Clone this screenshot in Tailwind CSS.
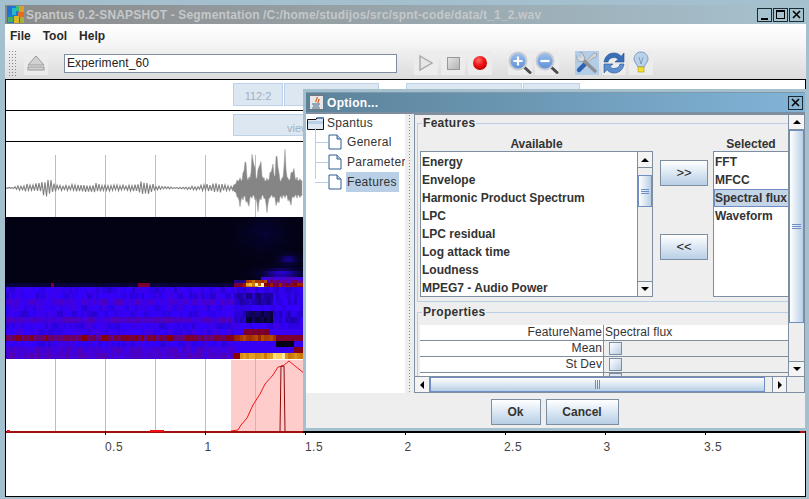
<!DOCTYPE html>
<html lang="en">
<head>
<meta charset="UTF-8">
<title>Spantus</title>
<script src="https://cdn.jsdelivr.net/npm/@tailwindcss/browser@4"></script>
</head>
<body class="m-0 overflow-hidden bg-[#a4bfce] font-['Liberation_Sans',sans-serif] text-[12px] text-[#333]">
<div class="relative w-[809px] h-[499px] flex flex-col pt-[5px] pl-[5px] pr-[3px] overflow-hidden">

  <!-- main title bar -->
  <div class="h-[19px] shrink-0 flex items-center bg-gradient-to-r from-[#8a8a8a] to-[#a6c2cf]">
    <svg width="17" height="17" class="ml-[2px] shrink-0" viewBox="0 0 17 17" shape-rendering="crispEdges">
      <rect width="17" height="17" fill="#1a7ad8"/><rect x="0" y="0" width="5" height="8" fill="#2470d0"/><rect x="5" y="2" width="4" height="7" fill="#26b8c8"/><rect x="9" y="0" width="3" height="5" fill="#38c070"/><rect x="12" y="0" width="5" height="6" fill="#d8a030"/><rect x="11" y="6" width="6" height="5" fill="#e86a20"/><rect x="1" y="11" width="5" height="5" fill="#46b060"/><rect x="7" y="10" width="5" height="7" fill="#d8b828"/><rect x="13" y="11" width="4" height="6" fill="#a8b040"/>
    </svg>
    <span class="ml-[2px] font-bold tracking-[0.16px] text-[12px] text-[#c4c8ca] whitespace-nowrap">Spantus 0.2-SNAPSHOT - Segmentation /C:/home/studijos/src/spnt-code/data/t_1_2.wav</span>
    <div class="ml-auto flex gap-[1px] mr-[2px]">
      <div class="w-[15px] h-[14px] border border-[#1c2a33] bg-[#a6c2cf] flex items-end justify-center pb-[1px]"><div class="w-[7px] h-[2px] bg-black"></div></div>
      <div class="w-[15px] h-[14px] border border-[#1c2a33] bg-[#a6c2cf] flex items-center justify-center"><div class="w-[9px] h-[9px] border border-black border-t-2"></div></div>
      <div class="w-[15px] h-[14px] border border-[#1c2a33] bg-[#a6c2cf] flex items-center justify-center"><svg width="9" height="9" viewBox="0 0 9 9"><path d="M1 1L8 8M8 1L1 8" stroke="#000" stroke-width="1.6"/></svg></div>
    </div>
  </div>

  <!-- menu bar -->
  <div class="h-[23px] shrink-0 flex items-center gap-[12px] pl-[5px] bg-gradient-to-b from-white to-[#f4f4f4] font-bold text-[12px] text-[#2a2a2a]">
    <span>File</span><span>Tool</span><span>Help</span>
  </div>

  <!-- tool bar -->
  <div class="h-[32px] shrink-0 flex items-center bg-gradient-to-b from-[#f2f2f2] to-[#dcdcdc]">
    <div class="w-[9px] h-[27px] ml-[3px] bg-[radial-gradient(#888_0.7px,transparent_0.8px)] bg-[length:3px_3px]"></div>
    <div class="w-[24px] h-[24px] ml-[7px] bg-[#ececec] flex items-center justify-center">
      <svg width="18" height="18" viewBox="0 0 18 18"><path d="M9 2L17 11H1Z" fill="#d2d2d2" stroke="#999"/><rect x="1" y="13" width="16" height="3" fill="#d2d2d2" stroke="#999"/></svg>
    </div>
    <div class="w-[333px] h-[19px] ml-[16px] border border-[#7c8ea0] bg-white pl-[2px] leading-[17px] text-[12px] tracking-[0.1px] text-[#222]">Experiment_60</div>
    <div class="w-[24px] h-[24px] ml-[17px] bg-[#ececec] flex items-center justify-center">
      <svg width="16" height="18" viewBox="0 0 16 18"><path d="M2 2L14 9L2 16Z" fill="#e6e6e6" stroke="#a8a8a8" stroke-width="1.4"/></svg>
    </div>
    <div class="w-[24px] h-[24px] ml-[3px] bg-[#ececec] flex items-center justify-center">
      <div class="w-[13px] h-[13px] border border-[#999] bg-gradient-to-br from-[#e4e4e4] to-[#b4b4b4]"></div>
    </div>
    <div class="w-[24px] h-[24px] ml-[3px] bg-[#ececec] flex items-center justify-center">
      <svg width="16" height="16" viewBox="0 0 16 16"><defs><radialGradient id="rec" cx="0.4" cy="0.3" r="0.8"><stop offset="0" stop-color="#ff6a6a"/><stop offset="0.5" stop-color="#ee1111"/><stop offset="1" stop-color="#a80000"/></radialGradient></defs><circle cx="8" cy="8" r="7" fill="url(#rec)"/></svg>
    </div>
    <div class="w-[24px] h-[24px] ml-[16px] bg-[#ececec] flex items-center justify-center">
      <svg width="24" height="24" viewBox="0 0 24 24"><defs><linearGradient id="lens" x1="0" y1="0" x2="0" y2="1"><stop offset="0" stop-color="#9cc0ec"/><stop offset="1" stop-color="#5d90d6"/></linearGradient></defs><path d="M15.500 15.500L22 21.500" stroke="#4c4c4c" stroke-width="3" stroke-linecap="round"/><circle cx="10" cy="10" r="8.500" fill="url(#lens)" stroke="#c8ccd2" stroke-width="2"/><path d="M5.500 10H14.500M10 5.500V14.500" stroke="#fff" stroke-width="2.200"/></svg>
    </div>
    <div class="w-[24px] h-[24px] ml-[3px] bg-[#ececec] flex items-center justify-center">
      <svg width="24" height="24" viewBox="0 0 24 24"><path d="M15.500 15.500L22 21.500" stroke="#4c4c4c" stroke-width="3" stroke-linecap="round"/><circle cx="10" cy="10" r="8.500" fill="url(#lens)" stroke="#c8ccd2" stroke-width="2"/><path d="M5.500 10H14.500" stroke="#fff" stroke-width="2.200"/></svg>
    </div>
    <div class="w-[24px] h-[24px] ml-[16px] bg-[#b4cde6] flex items-center justify-center">
      <svg width="24" height="24" viewBox="0 0 24 24">
        <path d="M19 2L22 3L21 6L18 7L9 15L8 14Z" fill="#d4d6d8" stroke="#8a8f94" stroke-width="0.600"/>
        <path d="M10 13L4 19" stroke="#2f62b0" stroke-width="4.500" stroke-linecap="round"/>
        <path d="M7 8L20 20" stroke="#8d9196" stroke-width="3.500" stroke-linecap="round"/>
        <path d="M7 1.500A5 5 0 0 0 2 8A5 5 0 0 0 9 10L10 7.500Z" fill="#d8dadc" stroke="#7a8086" stroke-width="0.600"/>
        <path d="M2 2L6 6" stroke="#b4cde6" stroke-width="3.500"/>
      </svg>
    </div>
    <div class="w-[24px] h-[24px] ml-[3px] bg-[#ececec] flex items-center justify-center">
      <svg width="24" height="24" viewBox="0 0 24 24"><path d="M2 11C3 5 7 2 12 2C15 2 18 3.500 19 5.500L22 2V11H13L16 8.500C15 7 13.500 6.500 12 6.500C9 6.500 6.500 8 6 11Z" fill="#3a6fb8" stroke="#25508c" stroke-width="0.600"/><path d="M22 13C21 19 17 22 12 22C9 22 6 20.500 5 18.500L2 22V13H11L8 15.500C9 17 10.500 17.500 12 17.500C15 17.500 17.500 16 18 13Z" fill="#5b8fd2" stroke="#25508c" stroke-width="0.600"/></svg>
    </div>
    <div class="w-[24px] h-[24px] ml-[3px] bg-[#ececec] flex items-center justify-center">
      <svg width="20" height="24" viewBox="0 0 20 24"><path d="M10 1C5 1 3 5 3 8C3 11 6 13 7 16H13C14 13 17 11 17 8C17 5 15 1 10 1Z" fill="#b9d2ea" stroke="#7e9cc0"/><path d="M8 6L10 13L12 6" fill="none" stroke="#6f8fb5" stroke-width="0.800"/><rect x="7" y="16" width="6" height="5" fill="#f2e030" stroke="#a89a10" stroke-width="0.600"/></svg>
    </div>
  </div>

  <!-- content -->
  <div class="h-[418px] shrink-0 flex flex-col border border-black bg-white overflow-hidden">
    <div class="h-[31px] shrink-0 border-b border-black pl-[227px] pt-[3px] flex">
      <div class="w-[50px] h-[23px] bg-[#dde7f2] border border-[#bdd2e8] text-[#9fb0c0] text-[11px] flex items-end justify-center leading-[17px]">112:2</div>
      <div class="w-[95px] ml-[1px] h-[23px] bg-[#dde7f2] border border-[#bdd2e8]"></div>
      <div class="w-[27px] h-[23px]"></div>
      <div class="w-[116px] h-[23px] bg-[#dde7f2] border border-[#bdd2e8]"></div>
      <div class="w-[57px] ml-[1px] h-[23px] bg-[#dde7f2] border border-[#bdd2e8]"></div>
    </div>
    <div class="h-[31px] shrink-0 border-b border-black pl-[227px] pt-[3px]">
      <div class="w-[108px] h-[22px] bg-[#dde7f2] border border-[#bdd2e8] text-[#9fb0c0] text-[11px] leading-[26px] pl-[53px] overflow-hidden">view</div>
    </div>
    <svg id="plot" width="800" height="354" class="block shrink-0" viewBox="0 0 800 354"></svg>
    <div class="flex-1"></div>
  </div>

  <!-- options dialog -->
  <div class="absolute left-[303px] top-[89px] w-[505px] h-[342px] bg-[#a4bfce] p-[3px] flex flex-col">
    <div class="h-[20px] shrink-0 flex items-center bg-gradient-to-r from-[#5b8299] to-[#82b4d8] border-t border-[#7d9aab]">
      <div class="w-[15px] h-[15px] ml-[3px] bg-[#e8e8e8] border border-[#777] flex items-center justify-center">
        <svg width="13" height="13" viewBox="0 0 13 13"><path d="M7 1C8 3 5 4 6 6M9 3C9 5 8 5 8 7" fill="none" stroke="#d8581a" stroke-width="1.200"/><path d="M2 8H10M3 10H9M2 12H10" stroke="#44668a" stroke-width="1"/></svg>
      </div>
      <span class="ml-[3px] font-bold text-white text-[12px] tracking-[0.3px]">Option...</span>
      <div class="ml-auto mr-[2px] w-[15px] h-[14px] border border-[#1c2a33] bg-[#88b6d6] flex items-center justify-center"><svg width="9" height="9" viewBox="0 0 9 9"><path d="M1 1L8 8M8 1L1 8" stroke="#000" stroke-width="1.600"/></svg></div>
    </div>

    <div class="flex-1 flex flex-col bg-[#eeeeee] min-h-0 border-t-2 border-[#7c8ea0]">
      <div class="h-[279px] shrink-0 flex bg-white">
        <!-- tree -->
        <div class="w-[99px] shrink-0 bg-white relative overflow-hidden">
          <div class="flex items-center h-[20px] pl-[1px] -mt-[1px]">
            <svg width="17" height="14" class="shrink-0" viewBox="0 0 17 14"><path d="M0.500 3.500H9L10 1.500H16.500V13.500H0.500Z" fill="#dfe8f2" stroke="#111"/><rect x="10" y="1" width="7" height="2" fill="#5b86b8"/><rect x="1" y="5" width="15" height="3" fill="#b8cfe6"/></svg>
            <span class="ml-[3px] tracking-[0.3px]">Spantus</span>
          </div>
          <div class="absolute left-[9px] top-[14px] w-[1px] h-[51px] bg-[#b8cfe6]"></div>
          <div class="flex items-center h-[20px] pl-[9px] -mt-[1px] whitespace-nowrap">
            <div class="w-[13px] h-[1px] shrink-0 bg-[#b8cfe6]"></div>
            <svg width="14" height="16" class="shrink-0" viewBox="0 0 14 16"><path d="M1 1H9L13 5V15H1Z" fill="#fff" stroke="#2f5f96"/><path d="M9 1V5H13" fill="#b8cfe6" stroke="#2f5f96"/></svg>
            <span class="ml-[5px] tracking-[0.3px]">General</span>
          </div>
          <div class="flex items-center h-[20px] pl-[9px] whitespace-nowrap">
            <div class="w-[13px] h-[1px] shrink-0 bg-[#b8cfe6]"></div>
            <svg width="14" height="16" class="shrink-0" viewBox="0 0 14 16"><path d="M1 1H9L13 5V15H1Z" fill="#fff" stroke="#2f5f96"/><path d="M9 1V5H13" fill="#b8cfe6" stroke="#2f5f96"/></svg>
            <span class="ml-[5px] tracking-[0.3px]">Parameters</span>
          </div>
          <div class="flex items-center h-[20px] pl-[9px] whitespace-nowrap">
            <div class="w-[13px] h-[1px] shrink-0 bg-[#b8cfe6]"></div>
            <svg width="14" height="16" class="shrink-0" viewBox="0 0 14 16"><path d="M1 1H9L13 5V15H1Z" fill="#fff" stroke="#2f5f96"/><path d="M9 1V5H13" fill="#b8cfe6" stroke="#2f5f96"/></svg>
            <span class="ml-[4px] pl-[1px] w-[53px] h-[20px] leading-[20px] tracking-[0.3px] bg-[#b8cfe6]">Features</span>
          </div>
        </div>
        <!-- splitter -->
        <div class="w-[9px] shrink-0 bg-[#eeeeee] flex justify-center"><div class="w-[3px] h-full bg-[radial-gradient(#888_0.6px,transparent_0.7px)] bg-[length:3px_3px]"></div></div>

        <!-- scroll pane -->
        <div class="flex-1 min-w-0 border border-[#7c8ea0] flex flex-col bg-[#eeeeee]">
          <div class="flex-1 min-h-0 flex">
            <div class="w-[373px] shrink-0 overflow-hidden">
              <div class="relative mt-[8px] ml-[2px] w-[372px] h-[179px] border border-[#b8cfe6] border-r-0">
                <span class="absolute left-[4px] -top-[8px] px-[1px] bg-[#eeeeee] font-bold leading-[14px] tracking-[0.3px]">Features</span>
                <div class="flex pt-[13px] pl-[2px]">
                  <div class="w-[233px] shrink-0">
                    <div class="h-[14px] text-center font-bold leading-[14px]">Available</div>
                    <div class="h-[146px] border border-[#7c8ea0] bg-white flex">
                      <div class="flex-1 font-bold leading-[18px] pl-[1px] pt-[1px] whitespace-nowrap">
                        <div>Energy</div><div>Envelope</div><div>Harmonic Product Spectrum</div><div>LPC</div><div>LPC residual</div><div>Log attack time</div><div>Loudness</div><div>MPEG7 - Audio Power</div>
                      </div>
                      <div class="w-[15px] shrink-0 flex flex-col bg-[#eeeeee] border-l border-[#7c8ea0]">
                        <div class="h-[16px] shrink-0 border-b border-[#7c8ea0] bg-[#f4f4f4] flex items-center justify-center"><div class="w-0 h-0 border-x-[4px] border-x-transparent border-b-[4px] border-b-black"></div></div>
                        <div class="h-[7px] shrink-0"></div>
                        <div class="h-[32px] shrink-0 border border-[#6f8fc4] bg-gradient-to-r from-white to-[#b8cfe6] flex flex-col items-center justify-center gap-[1px]"><div class="w-[8px] h-[1px] bg-[#6f8fc4]"></div><div class="w-[8px] h-[1px] bg-[#6f8fc4]"></div><div class="w-[8px] h-[1px] bg-[#6f8fc4]"></div></div>
                        <div class="flex-1"></div>
                        <div class="h-[15px] shrink-0 border-t border-[#7c8ea0] bg-[#f4f4f4] flex items-center justify-center"><div class="w-0 h-0 border-x-[4px] border-x-transparent border-t-[4px] border-t-black"></div></div>
                      </div>
                    </div>
                  </div>
                  <div class="w-[60px] shrink-0 pl-[7px] pt-[23px] flex flex-col gap-[48px]">
                    <div class="w-[48px] h-[26px] border border-[#7c8ea0] bg-gradient-to-b from-white to-[#b8cfe6] flex items-center justify-center text-[#222] text-[13px]">&gt;&gt;</div>
                    <div class="w-[48px] h-[26px] border border-[#7c8ea0] bg-gradient-to-b from-white to-[#b8cfe6] flex items-center justify-center text-[#222] text-[13px]">&lt;&lt;</div>
                  </div>
                  <div class="w-[76px] shrink-0">
                    <div class="h-[14px] text-center font-bold leading-[14px]">Selected</div>
                    <div class="h-[146px] border border-[#7c8ea0] border-r-0 bg-white font-bold leading-[18px] pt-[1px] overflow-hidden whitespace-nowrap">
                      <div class="pl-[1px]">FFT</div><div class="pl-[1px]">MFCC</div>
                      <div class="pl-[1px] bg-[#c4d5e8] outline outline-1 -outline-offset-1 outline-[#6f8fc4]">Spectral flux</div>
                      <div class="pl-[1px]">Waveform</div>
                    </div>
                  </div>
                </div>
              </div>
              <div class="relative mt-[10px] ml-[2px] w-[372px] h-[71px] border-t border-l border-[#b8cfe6]">
                <span class="absolute left-[4px] -top-[8px] px-[1px] bg-[#eeeeee] font-bold leading-[14px] tracking-[0.3px]">Properties</span>
                <div class="ml-[2px] mt-[12px] text-[#333] tracking-[0.1px]">
                  <div class="flex h-[16px] border-b border-[#7c8ea0] bg-white leading-[15px]"><div class="w-[184px] shrink-0 text-right pr-[1px] border-r border-[#7c8ea0]">FeatureName</div><div class="pl-[1px]">Spectral flux</div></div>
                  <div class="flex h-[16px] border-b border-[#7c8ea0] leading-[15px]"><div class="w-[184px] shrink-0 text-right pr-[1px] border-r border-[#7c8ea0] bg-white">Mean</div><div class="pl-[5px] pt-[1px]"><div class="w-[13px] h-[13px] border border-[#7c8ea0] bg-gradient-to-br from-white to-[#b8cfe6]"></div></div></div>
                  <div class="flex h-[16px] border-b border-[#7c8ea0] leading-[15px]"><div class="w-[184px] shrink-0 text-right pr-[1px] border-r border-[#7c8ea0] bg-white">St Dev</div><div class="pl-[5px] pt-[1px]"><div class="w-[13px] h-[13px] border border-[#7c8ea0] bg-gradient-to-br from-white to-[#b8cfe6]"></div></div></div>
                  <div class="flex h-[4px] overflow-hidden"><div class="w-[184px] shrink-0 border-r border-[#7c8ea0] bg-white"></div><div class="pl-[5px]"><div class="w-[13px] h-[13px] border border-[#7c8ea0] bg-[#dfe8f2]"></div></div></div>
                </div>
              </div>
            </div>
            <!-- vertical scrollbar -->
            <div class="w-[16px] shrink-0 flex flex-col border-l border-[#7c8ea0] bg-[#eeeeee]">
              <div class="h-[15px] shrink-0 bg-[#f4f4f4] border-b border-[#7c8ea0] flex items-center justify-center"><div class="w-0 h-0 border-x-[4px] border-x-transparent border-b-[4px] border-b-black"></div></div>
              <div class="h-[193px] shrink-0 border border-[#6f8fc4] bg-gradient-to-r from-white to-[#b8cfe6] flex flex-col items-center justify-center gap-[1px]"><div class="w-[9px] h-[1px] bg-[#6f8fc4]"></div><div class="w-[9px] h-[1px] bg-[#6f8fc4]"></div><div class="w-[9px] h-[1px] bg-[#6f8fc4]"></div></div>
              <div class="flex-1"></div>
              <div class="h-[15px] shrink-0 bg-[#f4f4f4] border-t border-[#7c8ea0] flex items-center justify-center"><div class="w-0 h-0 border-x-[4px] border-x-transparent border-t-[4px] border-t-black"></div></div>
            </div>
          </div>
          <!-- horizontal scrollbar -->
          <div class="h-[16px] shrink-0 flex border-t border-[#7c8ea0]">
            <div class="w-[15px] shrink-0 bg-[#f4f4f4] border-r border-[#7c8ea0] flex items-center justify-center"><div class="w-0 h-0 border-y-[4px] border-y-transparent border-r-[4px] border-r-black"></div></div>
            <div class="w-[335px] shrink-0 border border-[#6f8fc4] bg-gradient-to-b from-white to-[#b8cfe6] flex items-center justify-center gap-[1px]"><div class="w-[1px] h-[9px] bg-[#6f8fc4]"></div><div class="w-[1px] h-[9px] bg-[#6f8fc4]"></div><div class="w-[1px] h-[9px] bg-[#6f8fc4]"></div></div>
            <div class="w-[7px] shrink-0"></div>
            <div class="w-[15px] shrink-0 bg-[#f4f4f4] border-x border-[#7c8ea0] flex items-center justify-center"><div class="w-0 h-0 border-y-[4px] border-y-transparent border-l-[4px] border-l-black"></div></div>
            <div class="flex-1"></div>
          </div>
        </div>
      </div>
      <!-- footer -->
      <div class="flex-1 flex items-start justify-center gap-[5px] pt-[6px] pr-[2px] font-bold">
        <div class="w-[50px] h-[26px] border border-[#7c8ea0] bg-gradient-to-b from-white to-[#b8cfe6] flex items-center justify-center">Ok</div>
        <div class="w-[73px] h-[26px] border border-[#7c8ea0] bg-gradient-to-b from-white to-[#b8cfe6] flex items-center justify-center">Cancel</div>
      </div>
    </div>
  </div>
</div>

<script>
// plot coordinates start at x=6, y=142 of the page
const NS = 'http://www.w3.org/2000/svg';
const plot = document.getElementById('plot');
const X0 = 6, Y0 = 142;
function add(tag, attrs, parent) {
  const el = document.createElementNS(NS, tag);
  for (const k in attrs) el.setAttribute(k, attrs[k]);
  (parent || plot).appendChild(el);
  return el;
}
let seed = 12345;
function rnd() { seed = (seed * 16807) % 2147483647; return seed / 2147483647; }
function bump(x, c, w) { return Math.exp(-Math.pow((x - c) / w, 2)); }

// pink region behind the chart
add('rect', { x: 231 - X0, y: 360 - Y0, width: 300, height: 71, fill: '#ffcccc' });

// grid lines
[55, 105, 155, 205, 255].forEach(x => {
  add('rect', { x: x - X0, y: 155 - Y0, width: 1, height: 276, fill: '#bdbdbd' });
});

// waveform, quiet part as a zigzag line
let quiet = [];
for (let x = 6; x < 236; x += 1.5) {
  let a = 1.5 + 3 * bump(x, 35, 14) + 7 * bump(x, 48, 5) + 3 * bump(x, 95, 30) + 6 * bump(x, 145, 9) + 3 * bump(x, 215, 14);
  a *= Math.min(1, (x - 4) / 16);
  a *= 1 - 0.6 * bump(x, 175, 8);
  const side = Math.round((x - 6) / 1.5) % 2 ? 1 : -1;
  quiet.push((x - X0) + ',' + (188 + side * a * (0.5 + 0.6 * rnd()) - Y0));
}
add('polyline', { points: quiet.join(' '), fill: 'none', stroke: '#808080', 'stroke-width': 1.1 });

// waveform, loud part as a filled band with narrow spikes
let upper = [], lower = [];
for (let x = 232; x < 303; x += 1) {
  const ramp = Math.min(1, (x - 232) / 6);
  const spikeUp = 26 * bump(x, 245, 1.500) + 30 * bump(x, 253, 2) + 24 * bump(x, 260, 2) + 18 * bump(x, 272, 2) + 34 * bump(x, 277, 1.500) + 30 * bump(x, 285, 1.500) + 14 * bump(x, 293, 2);
  const spikeDn = 10 * bump(x, 240, 2) + 12 * bump(x, 248, 2) + 14 * bump(x, 258, 2) + 18 * bump(x, 267, 1.500) + 12 * bump(x, 277, 2) + 10 * bump(x, 290, 2);
  const comb = x % 3 === 0 ? 1 : 0.72;
  const up = (11 * ramp + spikeUp) * comb * (0.85 + 0.15 * rnd());
  const dn = (11 * ramp + spikeDn) * comb * (0.85 + 0.15 * rnd());
  upper.push((x - X0) + ',' + (188 - up - Y0));
  lower.unshift((x - X0) + ',' + (188 + dn - Y0));
}
add('polygon', { points: upper.concat(lower).join(' '), fill: '#858585', stroke: '#9a9a9a', 'stroke-width': 0.5 });

// spectrogram colour map
function colour(v) {
  const stops = [[0, 2, 2, 16], [0.12, 8, 4, 60], [0.34, 50, 0, 255], [0.5, 92, 0, 160], [0.64, 136, 0, 0], [0.8, 200, 110, 0], [0.92, 245, 200, 60], [1, 255, 250, 220]];
  v = Math.min(1, Math.max(0, v));
  for (let i = 1; i < stops.length; i++) {
    if (v <= stops[i][0]) {
      const a = stops[i - 1], b = stops[i], t = (v - a[0]) / (b[0] - a[0]);
      return 'rgb(' + [1, 2, 3].map(c => Math.round(a[c] + (b[c] - a[c]) * t)).join(',') + ')';
    }
  }
  return 'rgb(255,250,220)';
}
// rows of this part are 3px tall, starting at y=217 (..., 277, 280, 283, 286)
function topLevel(x, y) {
  let v = 0.01;
  if (y >= 283) v = 0.1 + 0.03 * rnd();
  if (y >= 283 && ((x > 48 && x < 54) || (x > 135 && x < 150))) v = 0.6;
  if (x >= 232) {
    v += 0.09 * Math.exp(-Math.pow((x - 262) / 22, 2) - Math.pow((y - 232) / 16, 2)) * (0.6 + 0.4 * rnd());
    v += 0.2 * Math.exp(-Math.pow((x - 287) / 10, 2) - Math.pow((y - 258) / 5, 2));
    v += 0.28 * Math.exp(-Math.pow((x - 280) / 20, 2) - Math.pow((y - 272) / 5, 2));
    if (y === 277 && x > 258) v = 0.36 + 0.12 * rnd();
    if (y === 280) v = x > 243 && x < 265 ? 0.66 + 0.15 * rnd() : x >= 265 ? 0.42 + 0.16 * rnd() : 0.2;
    if (y >= 283) v = x > 243 && x < 262 ? 0.78 + 0.22 * rnd() : 0.55 + 0.15 * rnd();
  }
  return v;
}
// mean level of each 6px band below the dark part (band starts at y)
const bands = { 287: 0.33, 293: 0.335, 299: 0.4, 305: 0.345, 311: 0.335, 317: 0.42, 323: 0.34, 329: 0.35, 335: 0.57, 341: 0.345, 347: 0.41, 353: 0.43 };
function bandLevel(x, y) {
  let v = bands[y] + 0.1 * (rnd() - 0.5);
  if (y === 335) v += 0.1 * (rnd() - 0.5);
  if (x >= 232) {
    if (y === 293 || y === 299) v = x < 272 ? 0.2 + 0.1 * rnd() : 0.28 + 0.08 * rnd();
    else if (y === 305) v = 0.3 + 0.05 * rnd();
    else if (y === 311 || y === 317) v = x > 243 && x < 272 ? 0.06 + 0.12 * rnd() : 0.24 + 0.1 * rnd();
    else if (y === 329) v = x > 240 && x < 270 ? 0.6 : 0.36;
    else if (y === 335) v = x < 276 ? 0.68 + 0.08 * rnd() : 0.6;
    else if (y === 341) v = x > 274 && x < 294 ? 0.02 : 0.36;
    else if (y === 347) v = x > 293 ? 0.62 : 0.36;
    else if (y === 353) {
      if (x < 240) v = 0.64;
      else if (x > 270 && x < 285) v = 0.93 + 0.07 * rnd();
      else v = 0.8 + 0.07 * rnd();
    }
  }
  return v;
}
for (let y = 217; y < 287; y += 3) {
  for (let x = 6; x < 304; x += 3) {
    add('rect', { x: x - X0, y: y - Y0, width: 3, height: 3, fill: colour(topLevel(x, y)), 'shape-rendering': 'crispEdges' });
  }
}
for (let y = 287; y < 359; y += 6) {
  for (let x = 6; x < 304; x += 3) {
    add('rect', { x: x - X0, y: y - Y0, width: 3, height: 6, fill: colour(bandLevel(x, y)), 'shape-rendering': 'crispEdges' });
  }
}

// chart lines
add('polyline', { points: [[231,431],[238,430],[241,425],[247,418],[253,405],[260,394],[265,384],[273,375],[278,367],[283,366],[289,361],[305,374]].map(p => (p[0] - X0) + ',' + (p[1] - Y0)).join(' '), fill: 'none', stroke: '#f01515', 'stroke-width': 1 });
add('polyline', { points: [[280,431],[281,366],[284,366],[285,431]].map(p => (p[0] - X0) + ',' + (p[1] - Y0)).join(' '), fill: 'none', stroke: '#8a0a0a', 'stroke-width': 1 });

// axis
add('rect', { x: 0, y: 431 - Y0, width: 800, height: 2, fill: '#a01010' });
add('rect', { x: 150 - X0, y: 430 - Y0, width: 14, height: 2, fill: '#ee1010' });
add('rect', { x: 7 - X0, y: 430 - Y0, width: 3, height: 2, fill: '#ee1010' });
add('rect', { x: 303 - X0, y: 431 - Y0, width: 497, height: 2, fill: '#000' });
[105, 205, 305, 405, 505, 605, 705].forEach(x => {
  add('rect', { x: x - X0, y: 431 - Y0, width: 1, height: 4, fill: '#000' });
});
[['0.5', 114], ['1', 208], ['1.5', 314], ['2', 408], ['2.5', 513], ['3', 607], ['3.5', 713]].forEach(t => {
  const el = add('text', { x: t[1] - X0, y: 451 - Y0, 'text-anchor': 'middle', 'font-family': 'Liberation Sans, sans-serif', 'font-size': 12, 'letter-spacing': 0.5, fill: '#444' });
  el.textContent = t[0];
});
</script>
</body>
</html>
